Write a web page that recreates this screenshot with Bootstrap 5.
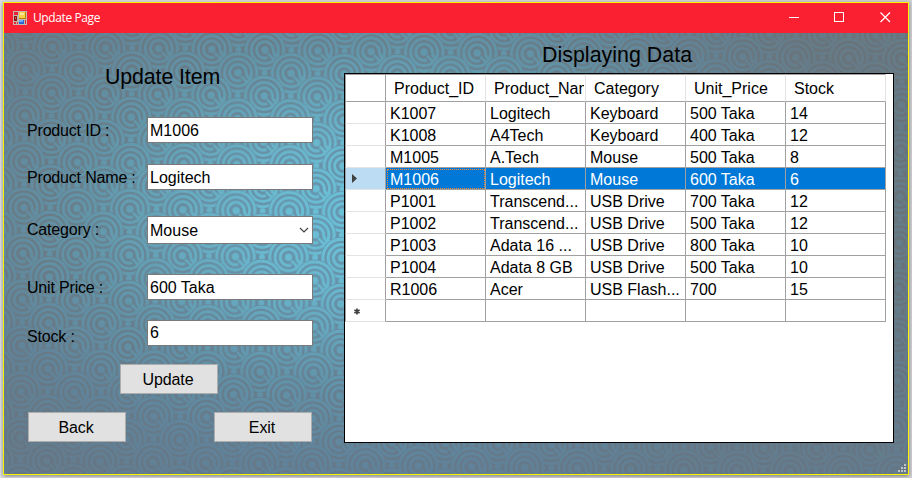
<!DOCTYPE html>
<html lang="en">
<head>
<meta charset="utf-8">
<title>Update Page</title>
<link href="https://cdn.jsdelivr.net/npm/bootstrap@5.3.0/dist/css/bootstrap.min.css" rel="stylesheet">
<style>
  body { width: 912px; height: 478px; overflow: hidden; background: linear-gradient(90deg, #dfdfe2, #d2d2d5); padding: 2px 3px 3px; font: 16px/20px "Liberation Sans", Arial, sans-serif; color: #000; }
  .app-window { height: 473px; border: 1px solid #f8f500; border-right-color: #fff200; box-shadow: 0 1px 4px rgba(0,0,0,.45); }
  .title-bar { height: 30px; background: #fb2031; color: #fff; font: 12px/30px "Open Sans", sans-serif; padding-left: 9px; }
  .title-text { margin-left: 6px; letter-spacing: -.4px; }
  .caption-btn { width: 46px; height: 30px; position: relative; left: 1px; }
  .client-area { display: grid; height: 441px; overflow: hidden; }
  .client-area > * { grid-area: 1 / 1; }
  .scene { z-index: 0; }
  .client-content { z-index: 1; }
  .form-side { width: 340px; padding: 32px 31px 0 23px; }
  .heading-text { font-size: 21.33px; line-height: 24px; font-weight: 400; margin: 0; }
  .form-side .heading-text { margin-left: 78px; height: 52px; letter-spacing: -.1px; }
  .field { display: grid; grid-template-columns: 120px 166px; height: 26px; }
  .field label { padding-top: 4px; letter-spacing: -.18px; white-space: nowrap; }
  .field .form-control { height: 100%; min-height: 0; border: 1px solid #7a7a7a; border-radius: 0; padding: 1px 0 0 2px; font-size: 16px; line-height: 23px; color: #000; background-color: #fff; }
  .field-combo { height: 28px; }
  .field-stock label { padding-top: 7px; height: 26px; }
  .field-stock .form-control { padding-top: 0; }
  .field-combo .form-control { padding-top: 0; }
  .win-btn { width: 98px; height: 30px; border: 1px solid #adadad; border-radius: 0; background: #e1e1e1; color: #000; padding: 1px 2px 0 0; font-size: 16px; line-height: 27px; letter-spacing: -.1px; }
  .gap-a { margin-top: 21px; } .gap-b { margin-top: 26px; } .gap-c { margin-top: 30px; } .gap-d { margin-top: 20px; } .gap-e { margin-top: 18px; }
  .btn-line { padding: 0 1px; }
  .btn-line-mid { padding-right: 2px; }
  .data-side { width: 550px; padding-top: 10px; }
  .data-side .heading-text { margin-left: 198px; height: 30px; letter-spacing: .05px; }
  .grid-box { height: 370px; border: 1px solid #000; background: #fff; }
  .data-grid { width: 541px; table-layout: fixed; border-collapse: separate; border-spacing: 0; }
  .data-grid th, .data-grid td { height: 22px; padding: 2px 0 0 4px; line-height: 19px; font-weight: 400; white-space: nowrap; overflow: hidden; border-right: 1px solid #a0a0a0; border-bottom: 1px solid #a0a0a0; }
  .data-grid thead th { height: 28px; padding: 0 1px 0 8px; border-top: 1px solid #a0a0a0; border-right-color: #e3e3e3; line-height: 25px; }
  .data-grid thead th:first-child { border-right-color: #a0a0a0; }
  .data-grid tr > :first-child { border-left: 1px solid #a0a0a0; }
  .data-grid tbody th { border-bottom-color: #e3e3e3; padding: 0 0 0 5px; }
  .data-grid svg { display: block; }
  .clip-text { display: block; overflow: hidden; }
  .picked td { background: #0078d7; color: #fff; }
  .picked th { background: #bcdcf4; }
  .picked td.focused { outline: 1px dotted #ff8728; outline-offset: -2px; }
</style>
</head>
<body>
<main class="app-window">
  <header class="title-bar d-flex align-items-center">
    <svg width="14" height="14" viewBox="0 0 14 14" shape-rendering="crispEdges">
      <path fill="#c3b9b0" d="M0 0h14v14H0z"/><path fill="#e52535" d="M1 1h4v3H1zM1 11h2v2H1zM4 11h1v2H4z"/>
      <path fill="#8d1517" d="M1 5h3v5H1z"/><path fill="#d95240" d="M2 6h1v2H2z"/>
      <path fill="#b78100" d="M6 1h7v7H6z"/><path fill="#ffd044" d="M6 1h6v6H6z"/><path fill="#ffeaa0" d="M7 2h4v2H7z"/>
      <path fill="#2b63d0" d="M6 9h5v4H6z"/><path fill="#6fabff" d="M6 9h4v2H6z"/><path fill="#e52535" d="M12 9h1v4h-1z"/>
    </svg>
    <span class="title-text">Update Page</span>
    <svg class="caption-btn ms-auto" viewBox="0 0 46 30" shape-rendering="crispEdges"><path d="M18 14.500h10" stroke="#fff"/></svg>
    <svg class="caption-btn" viewBox="0 0 46 30" shape-rendering="crispEdges"><path d="M17.500 9.500h9v9h-9z" fill="none" stroke="#fff"/></svg>
    <svg class="caption-btn" viewBox="0 0 46 30"><path d="M17.500 9.500l9.500 9.500M27 9.500l-9.500 9.500" stroke="#fff" stroke-width="1.200"/></svg>
  </header>

  <div class="client-area">
    <svg class="scene" width="904" height="441" aria-hidden="true">
      <defs>
        <g id="scale">
          <circle r="21" fill="#000"/>
          <g fill="none" stroke="#fff" stroke-width="3">
            <circle r="18.800"/><circle r="13.500"/>
            <path d="M3 7.700A8.300 8.300 0 1 1 8.300 0C8.500 5 12 7 16 6.500"/>
          </g>
          <circle r="3.700" fill="#fff"/>
          <path d="M3 3.500L9 9.500" stroke="#fff" stroke-width="2.600"/>
        </g>
        <circle id="gapdot" r="3" fill="#fff"/>
        <pattern id="waves" width="53.100" height="46" patternUnits="userSpaceOnUse" patternTransform="translate(48.500 14) rotate(.8)">
          <rect width="53.100" height="46" fill="#000"/>
          <use href="#scale" x="26.550" y="-23"/>
          <use href="#scale"/><use href="#scale" x="53.100"/><use href="#gapdot" x="26.550"/>
          <use href="#scale" x="26.550" y="23"/><use href="#gapdot" y="23"/><use href="#gapdot" x="53.100" y="23"/>
          <use href="#scale" y="46"/><use href="#scale" x="53.100" y="46"/><use href="#gapdot" x="26.550" y="46"/>
        </pattern>
        <mask id="wavemask"><rect width="904" height="441" fill="url(#waves)"/></mask>
        <radialGradient id="deep" gradientUnits="userSpaceOnUse" cx="0" cy="0" r="1" gradientTransform="translate(370 185) scale(520 310)">
          <stop offset="0" stop-color="#6699b3"/><stop offset=".3" stop-color="#6791a7"/><stop offset=".6" stop-color="#687d89"/><stop offset="1" stop-color="#69737a"/>
        </radialGradient>
        <radialGradient id="bright" gradientUnits="userSpaceOnUse" cx="0" cy="0" r="1" gradientTransform="translate(370 185) scale(520 310)">
          <stop offset="0" stop-color="#6ac3da"/><stop offset=".25" stop-color="#6ab8ce"/><stop offset=".55" stop-color="#6296aa"/><stop offset=".8" stop-color="#628497"/><stop offset="1" stop-color="#667c88"/>
        </radialGradient>
        <linearGradient id="tint" x2="0" y2="1"><stop offset=".5" stop-color="#5a7fa8" stop-opacity="0"/><stop offset="1" stop-color="#5a7fa8" stop-opacity=".22"/></linearGradient>
      </defs>
      <rect width="904" height="441" fill="url(#deep)"/>
      <rect width="904" height="441" fill="url(#bright)" mask="url(#wavemask)"/>
      <rect width="904" height="441" fill="url(#tint)"/>
      <path d="M900 431h2v2h-2zM897 434h2v2h-2zM900 434h2v2h-2zM894 437h2v2h-2zM897 437h2v2h-2zM900 437h2v2h-2z" fill="#c4c4c4"/>
    </svg>

    <div class="client-content d-flex">
      <form class="form-side">
        <h1 class="heading-text">Update Item</h1>
        <div class="field"><label for="pid">Product ID :</label><input class="form-control" id="pid" value="M1006"></div>
        <div class="field gap-a"><label for="pname">Product Name :</label><input class="form-control" id="pname" value="Logitech"></div>
        <div class="field field-combo gap-b"><label for="cat">Category :</label>
          <div class="form-control d-flex align-items-center justify-content-between" id="cat"><span>Mouse</span>
            <svg width="13" height="8" viewBox="0 0 13 8"><path d="M1 2l4 4 4-4" fill="none" stroke="#444" stroke-width="1.200"/></svg></div>
        </div>
        <div class="field gap-c"><label for="price">Unit Price :</label><input class="form-control" id="price" value="600 Taka"></div>
        <div class="field field-stock gap-d"><label for="stock">Stock :</label><input class="form-control" id="stock" value="6"></div>
        <div class="gap-e btn-line-mid d-flex justify-content-center"><button type="button" class="btn win-btn">Update</button></div>
        <div class="gap-e btn-line d-flex justify-content-between"><button type="button" class="btn win-btn">Back</button><button type="button" class="btn win-btn">Exit</button></div>
      </form>
      <section class="data-side">
        <h2 class="heading-text">Displaying Data</h2>
        <div class="grid-box">
          <table class="data-grid">
            <colgroup><col style="width:41px"><col><col><col><col><col></colgroup>
            <thead><tr><th></th><th>Product_ID</th><th><span class="clip-text">Product_Name</span></th><th>Category</th><th>Unit_Price</th><th>Stock</th></tr></thead>
            <tbody>
              <tr><th></th><td>K1007</td><td>Logitech</td><td>Keyboard</td><td>500 Taka</td><td>14</td></tr>
              <tr><th></th><td>K1008</td><td>A4Tech</td><td>Keyboard</td><td>400 Taka</td><td>12</td></tr>
              <tr><th></th><td>M1005</td><td>A.Tech</td><td>Mouse</td><td>500 Taka</td><td>8</td></tr>
              <tr class="picked"><th><svg width="8" height="11"><path d="M1 1l5 4.500L1 10z" fill="#404040"/></svg></th><td class="focused">M1006</td><td>Logitech</td><td>Mouse</td><td>600 Taka</td><td>6</td></tr>
              <tr><th></th><td>P1001</td><td>Transcend...</td><td>USB Drive</td><td>700 Taka</td><td>12</td></tr>
              <tr><th></th><td>P1002</td><td>Transcend...</td><td>USB Drive</td><td>500 Taka</td><td>12</td></tr>
              <tr><th></th><td>P1003</td><td>Adata 16 ...</td><td>USB Drive</td><td>800 Taka</td><td>10</td></tr>
              <tr><th></th><td>P1004</td><td>Adata 8 GB</td><td>USB Drive</td><td>500 Taka</td><td>10</td></tr>
              <tr><th></th><td>R1006</td><td>Acer</td><td>USB Flash...</td><td>700</td><td>15</td></tr>
              <tr><th><svg width="14" height="10"><path d="M6 2.500v6M3.400 4l5.200 3M8.600 4l-5.200 3" stroke="#404040" stroke-width="1.700"/></svg></th><td></td><td></td><td></td><td></td><td></td></tr>
            </tbody>
          </table>
        </div>
      </section>
    </div>
  </div>
</main>
<script src="https://cdn.jsdelivr.net/npm/bootstrap@5.3.0/dist/js/bootstrap.bundle.min.js"></script>
</body>
</html>
